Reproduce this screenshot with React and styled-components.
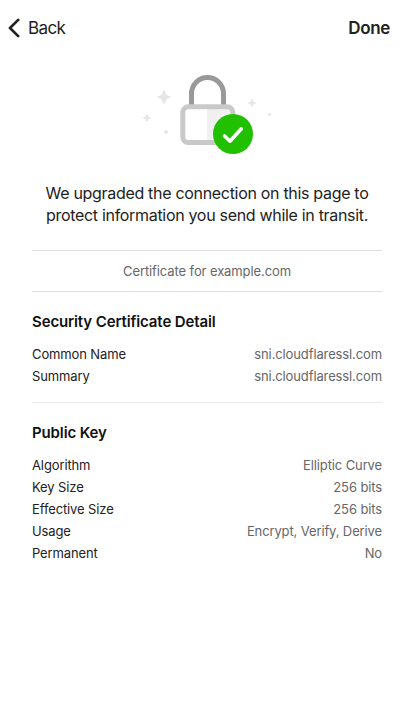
import React from "react";
import styled, { createGlobalStyle } from "styled-components";

const GlobalStyle = createGlobalStyle`
  *, *::before, *::after { box-sizing: border-box; }
  body {
    margin: 0;
    background: #fff;
    color: #222;
    font-family: Inter, "Liberation Sans", sans-serif;
    -webkit-font-smoothing: antialiased;
  }
`;

const Page = styled.main`
  display: flex;
  flex-direction: column;
  min-height: 715px;
  background: #fff;
`;

const Toolbar = styled.header`
  display: flex;
  align-items: center;
  justify-content: space-between;
  height: 56px;
  padding: 0 24px 0 7px;
`;

const ToolbarButton = styled.button`
  display: flex;
  align-items: center;
  gap: 7px;
  padding: 0;
  border: 0;
  background: none;
  color: #222;
  font: inherit;
  font-size: 17px;
  line-height: 24px;
  font-weight: ${({ $strong }) => ($strong ? 600 : 400)};
  letter-spacing: ${({ $strong }) => ($strong ? "-0.35px" : "-0.6px")};
`;

const Hero = styled.section`
  display: flex;
  flex-direction: column;
  align-items: center;
  padding: 14px 32px 24px;
`;

const Message = styled.p`
  margin: 22px 0 0;
  font-size: 16px;
  line-height: 22px;
  letter-spacing: -0.31px;
  text-align: center;
  white-space: nowrap;
`;

const Details = styled.div`
  display: flex;
  flex-direction: column;
  margin: 0 32px;
`;

const Issuer = styled.div`
  height: 42px;
  border: solid #ddd;
  border-width: 1px 0;
  color: #666;
  font-size: 13px;
  line-height: 41px;
  letter-spacing: -0.1px;
  text-align: center;
`;

const Section = styled.section`
  padding: 19px 0 15px;

  & + & {
    border-top: 1px solid #ebebeb;
  }
`;

const SectionTitle = styled.h2`
  margin: 0 0 11px;
  color: #111;
  font-size: 15px;
  font-weight: 600;
  line-height: 21px;
  letter-spacing: -0.12px;
`;

const Rows = styled.dl`
  margin: 0;
`;

const Row = styled.div`
  display: flex;
  justify-content: space-between;
  font-size: 13px;
  line-height: 22px;
  letter-spacing: -0.12px;
`;

const Label = styled.dt`
  color: #222;
`;

const Value = styled.dd`
  margin: 0;
  color: #666;
`;

function BackIcon() {
  return (
    <svg width="14" height="20" viewBox="0 0 14 20" fill="none" aria-hidden="true">
      <path d="M11.2 1.9 3 10l8.2 8.1" stroke="#222" strokeWidth="2.7" strokeLinecap="round" strokeLinejoin="round" />
    </svg>
  );
}

function LockIllustration() {
  return (
    <svg width="134" height="90" viewBox="140 70 134 90" fill="none" aria-hidden="true">
      <g fill="#e6e6e6">
        <path d="M164 90.5c.8 0 1.1.5 1.4 1.4l.9 2.5c.2.6.5.9 1.1 1.1l2.5.8c.7.2.9.5.9.8s-.2.6-.9.8l-2.5.8c-.6.2-.9.5-1.1 1.1l-.9 2.5c-.3.8-.6 1.3-1.4 1.3s-1.1-.5-1.4-1.3l-.9-2.5c-.2-.6-.5-.9-1.1-1.1l-2.5-.8c-.7-.2-.9-.5-.9-.8s.2-.6.9-.8l2.5-.8c.6-.2.9-.5 1.1-1.1l.9-2.5c.3-.9.6-1.4 1.4-1.4Z" />
        <path d="m147 114.5 1 2.5 2.5 1-2.5 1-1 2.5-1-2.5-2.5-1 2.5-1Z" stroke="#e6e6e6" strokeLinejoin="round" />
        <path d="m252 99.5 1 2.5 2.5 1-2.5 1-1 2.5-1-2.5-2.5-1 2.5-1Z" stroke="#e6e6e6" strokeLinejoin="round" />
        <circle cx="166" cy="132" r="2.1" />
        <circle cx="269.5" cy="114.5" r="1.6" />
      </g>
      <path d="M191.5 107V93.5a16 16 0 0 1 32 0V107" stroke="#999" strokeWidth="5" />
      <rect x="182.8" y="106.8" width="50" height="35.7" rx="5.5" fill="#fff" />
      <path d="M207 107h25v35h-25Z" fill="#f0f0f0" />
      <rect x="182.8" y="106.8" width="50" height="35.7" rx="5.5" stroke="#c9c9c9" strokeWidth="5" />
      <circle cx="233" cy="134" r="20" fill="#21c000" />
      <path d="m224.5 136 5.5 5.2 11.3-12.4" stroke="#fff" strokeWidth="3.6" strokeLinecap="round" strokeLinejoin="round" />
    </svg>
  );
}

const sections = [
  {
    title: "Security Certificate Detail",
    rows: [
      ["Common Name", "sni.cloudflaressl.com"],
      ["Summary", "sni.cloudflaressl.com"],
    ],
  },
  {
    title: "Public Key",
    rows: [
      ["Algorithm", "Elliptic Curve"],
      ["Key Size", "256 bits"],
      ["Effective Size", "256 bits"],
      ["Usage", "Encrypt, Verify, Derive"],
      ["Permanent", "No"],
    ],
  },
];

export default function App() {
  return (
    <>
      <GlobalStyle />
      <Page>
        <Toolbar>
          <ToolbarButton>
            <BackIcon />
            Back
          </ToolbarButton>
          <ToolbarButton $strong>Done</ToolbarButton>
        </Toolbar>
        <Hero>
          <LockIllustration />
          <Message>
            We upgraded the connection on this page to
            <br />
            protect information you send while in transit.
          </Message>
        </Hero>
        <Details>
          <Issuer>Certificate for example.com</Issuer>
          {sections.map(({ title, rows }) => (
            <Section key={title}>
              <SectionTitle>{title}</SectionTitle>
              <Rows>
                {rows.map(([label, value]) => (
                  <Row key={label}>
                    <Label>{label}</Label>
                    <Value>{value}</Value>
                  </Row>
                ))}
              </Rows>
            </Section>
          ))}
        </Details>
      </Page>
    </>
  );
}
